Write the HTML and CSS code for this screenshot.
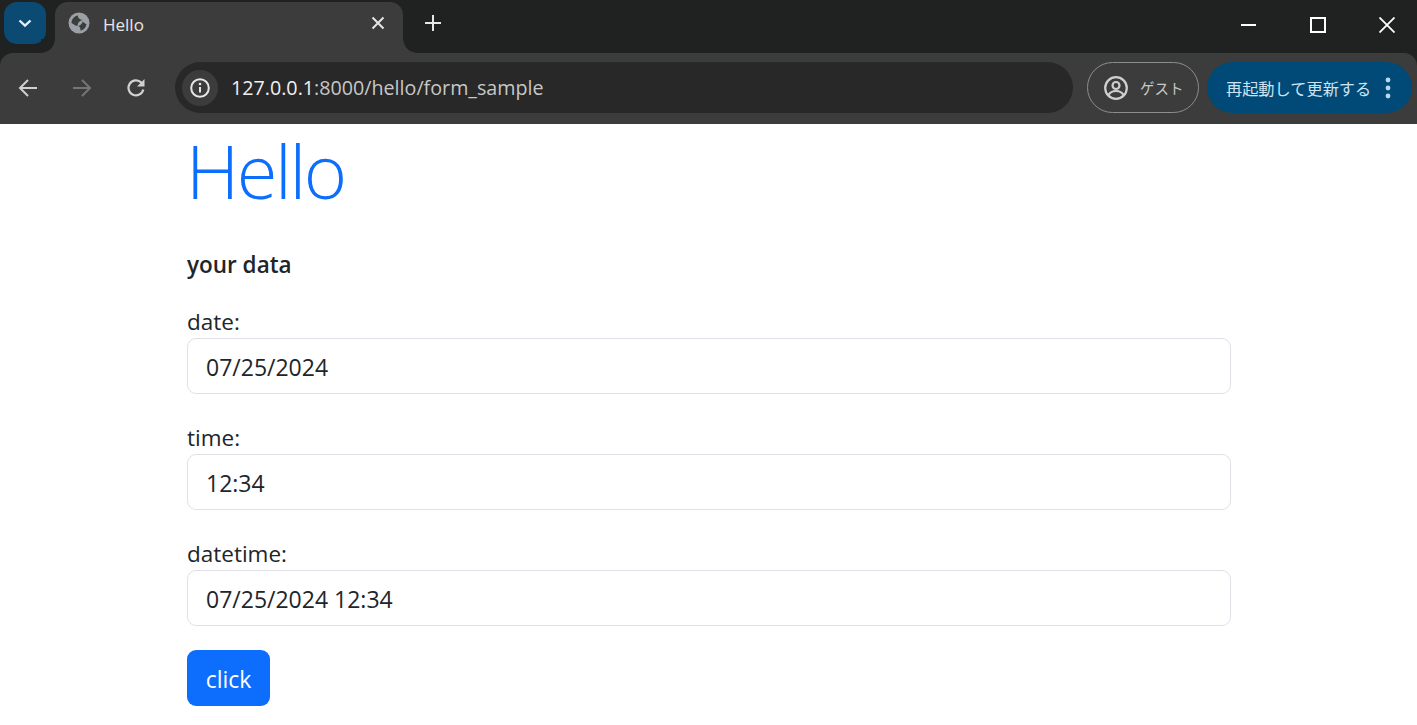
FILE: index.html
```html
<!DOCTYPE html>
<html lang="ja">
<head>
<meta charset="utf-8">
<title>Hello</title>
<link rel="stylesheet" href="styles.css">
</head>
<body>
<header class="browser">
  <div class="tabstrip">
    <button class="tab-search" aria-label="tabs">
      <svg viewBox="0 0 16 16" width="16" height="16"><path d="M2.500 5.500 8 10.700 13.500 5.500" fill="none" stroke="#e4eef5" stroke-width="2.400"/></svg>
    </button>
    <div class="tab">
      <svg class="globe" viewBox="0 0 22 22" width="22" height="22"><circle cx="11" cy="11" r="10.500" fill="#9aa0a6"/><path d="M3.500 11C3.500 7 6.500 3.800 10 3.400 9.500 6 12 7.500 14.500 8 11.500 9 9.500 10.500 9.500 14 7 13.500 5 12 3.500 11Z" fill="#3c3c3c"/><path d="M18.500 12c-.3 3.300-2.500 6-6 6.800.3-2.800-.8-4-2-4.800 2.200-1 3.700-2.200 4.300-4.500 1 1.200 2.200 2.200 3.700 2.500Z" fill="#3c3c3c"/></svg>
      <span class="tab-title">Hello</span>
      <svg class="tab-close" viewBox="0 0 14 14" width="14" height="14"><path d="M1.500 1.500 12.500 12.500M12.500 1.500 1.500 12.500" stroke="#e6e6e6" stroke-width="2"/></svg>
    </div>
    <svg class="new-tab" viewBox="0 0 16 16" width="16" height="16"><path d="M8 0v16M0 8h16" stroke="#e6e6e6" stroke-width="2"/></svg>
    <div class="window-controls">
      <svg viewBox="0 0 16 16" width="16" height="16"><path d="M0 8h15" stroke="#fff" stroke-width="2"/></svg>
      <svg viewBox="0 0 16 16" width="16" height="16"><rect x="1" y="1" width="14" height="14" fill="none" stroke="#fff" stroke-width="2"/></svg>
      <svg viewBox="0 0 16 16" width="16" height="16"><path d="M.5.5 15.500 15.500M15.500.5.500 15.500" stroke="#fff" stroke-width="1.800"/></svg>
    </div>
  </div>
  <div class="toolbar">
    <svg class="nav-icon" viewBox="0 0 20 20" width="20" height="20"><path d="M19 10H2M10 2 2 10l8 8" fill="none" stroke="#d0d0d0" stroke-width="2"/></svg>
    <svg class="nav-icon nav-forward" viewBox="0 0 20 20" width="20" height="20"><path d="M1 10h17M10 2l8 8-8 8" fill="none" stroke="#757575" stroke-width="2"/></svg>
    <svg class="nav-icon nav-reload" viewBox="0 0 20 20" width="20" height="20"><path d="M17.300 11.500A7.500 7.500 0 1 1 15.500 4.800" fill="none" stroke="#d0d0d0" stroke-width="2.200"/><path d="M18.500 1V8.500H11Z" fill="#d0d0d0"/></svg>
    <div class="omnibox">
      <span class="site-info">
        <svg viewBox="0 0 20 20" width="20" height="20"><circle cx="10" cy="10" r="8.800" fill="none" stroke="#e6e6e6" stroke-width="2"/><path d="M10 9v5.500" stroke="#e6e6e6" stroke-width="2"/><circle cx="10" cy="6" r="1.300" fill="#e6e6e6"/></svg>
      </span>
      <span class="url"><span class="url-host">127.0.0.1</span>:8000/hello/form_sample</span>
    </div>
    <div class="profile">
      <svg viewBox="0 0 24 24" width="24" height="24"><circle cx="12" cy="12" r="10.800" fill="none" stroke="#cfcfcf" stroke-width="2.200"/><circle cx="12" cy="9.500" r="3.500" fill="none" stroke="#cfcfcf" stroke-width="2.200"/><path d="M4.500 19c2-3.500 5-4 7.500-4s5.500.5 7.500 4" fill="none" stroke="#cfcfcf" stroke-width="2.200"/></svg>
      <span>ゲスト</span>
    </div>
    <div class="update">
      <span>再起動して更新する</span>
      <svg viewBox="0 0 6 22" width="6" height="22"><circle cx="3" cy="3" r="2.400" fill="#b5d9f2"/><circle cx="3" cy="11" r="2.400" fill="#b5d9f2"/><circle cx="3" cy="19" r="2.400" fill="#b5d9f2"/></svg>
    </div>
  </div>
</header>
<main class="container">
  <h1 class="title">Hello</h1>
  <p class="lead-text">your data</p>
  <form class="form">
    <div class="field">
      <label for="f-date">date:</label>
      <input id="f-date" type="text" value="07/25/2024">
    </div>
    <div class="field">
      <label for="f-time">time:</label>
      <input id="f-time" type="text" value="12:34">
    </div>
    <div class="field">
      <label for="f-dt">datetime:</label>
      <input id="f-dt" type="text" value="07/25/2024 12:34">
    </div>
    <button class="submit" type="button">click</button>
  </form>
</main>
</body>
</html>
```
FILE: styles.css
```css
* { box-sizing: border-box; }
html, body { margin: 0; padding: 0; height: 725px; overflow: hidden; background: #fff; }
body { font-family: "Open Sans", "Liberation Sans", sans-serif; color: #212529; }

.browser { height: 124px; background: #202221; font-family: "Open Sans", "Noto Sans CJK JP", sans-serif; }
.tabstrip { height: 53px; display: flex; align-items: flex-start; padding: 2px 0 0 4px; }
.tab-search { width: 42px; height: 42px; border: 0; padding: 0; border-radius: 13px; background: #0b4a72; display: flex; align-items: center; justify-content: center; }
.tab { position: relative; width: 348px; height: 51px; margin-left: 9px; background: #3c3c3c; border-radius: 13px 13px 0 0; display: flex; align-items: flex-start; padding: 10px 18px 0 13px; color: #e6e6e6; }
.tab::before, .tab::after { content: ""; position: absolute; bottom: 0; width: 14px; height: 14px; background: radial-gradient(circle at var(--cx) 0, #202221 13.500px, #3c3c3c 14px); }
.tab::before { left: -14px; --cx: 0; }
.tab::after { right: -14px; --cx: 100%; }
.globe { flex: none; }
.tab-title { margin-left: 13px; font-size: 17px; line-height: 25px; flex: 1; }
.tab-close { margin-top: 4px; margin-left: 0; }
.new-tab { margin: 13px 0 0 22px; }
.window-controls { margin-left: auto; display: flex; gap: 53px; padding: 15px 22px 0 0; }

.toolbar { height: 71px; background: #3c3c3c; border-radius: 13px 13px 0 0; display: flex; align-items: center; padding: 0 5px 2px 18px; }
.nav-icon { flex: none; margin-right: 34px; }
.nav-reload { margin-right: 29px; }
.omnibox { flex: none; width: 898px; height: 51px; border-radius: 26px; background: #282828; display: flex; align-items: center; padding-left: 7px; }
.site-info { width: 36px; height: 36px; border-radius: 50%; background: #3c3c3c; display: flex; align-items: center; justify-content: center; }
.url { margin-left: 13px; font-size: 19.700px; color: #c7c7c7; white-space: nowrap; }
.url-host { color: #f0f0f0; }
.profile { flex: none; width: 112px; height: 51px; margin-left: 14px; border: 1.500px solid #8d8d8d; border-radius: 26px; display: flex; align-items: center; gap: 12px; padding-left: 16px; font-size: 14.500px; color: #c8c8c8; }
.update { flex: none; width: 205px; height: 51px; margin-left: 8px; border-radius: 26px; background: #014a77; color: #cbe4f5; display: flex; align-items: center; padding-left: 19px; gap: 14px; font-size: 16.200px; white-space: nowrap; }

.container { width: 1044px; margin-left: 187px; }
.title { margin: 0; font-size: 74px; line-height: 93px; font-weight: 300; letter-spacing: -2.400px; text-indent: -1px; color: #0d6efd; height: 100px; }
.lead-text { margin: 23px 0 0; font-size: 22.500px; line-height: 36px; font-weight: 600; }
.form { margin-top: 19px; display: flex; flex-direction: column; }
.field { display: flex; flex-direction: column; margin-bottom: 24px; }
.field label { font-size: 22.500px; line-height: 39px; height: 36px; }
.field input { height: 56px; border: 1px solid #dee2e6; border-radius: 9px; padding: 2px 17px 0 18px; font: inherit; font-size: 23px; color: #212529; background: #fff; outline: 0; }
.submit { align-self: flex-start; width: 83px; height: 56px; padding: 2px 0 0; border: 0; border-radius: 9px; background: #0d6efd; color: #fff; font: inherit; font-size: 23px; }
```
